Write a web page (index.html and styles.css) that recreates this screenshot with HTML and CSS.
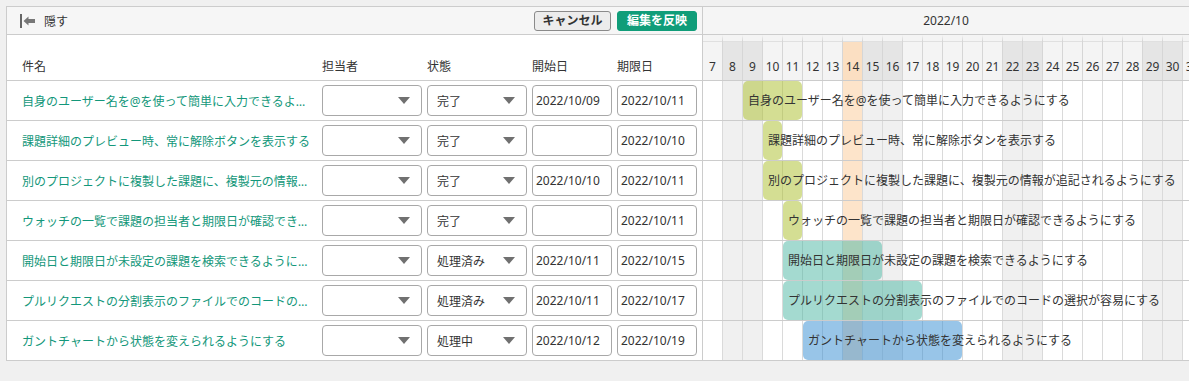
FILE: index.html
```html
<!DOCTYPE html>
<html lang="ja">
<head>
<meta charset="utf-8">
<title>Gantt</title>
<link rel="stylesheet" href="styles.css">
</head>
<body>
<div class="app">
  <div class="list">
    <div class="toolbar">
      <button class="hide">
        <svg width="16" height="16" viewBox="0 0 16 16" aria-hidden="true"><rect x="0" y="1" width="2" height="14" fill="#666"/><polygon points="3.5,8 8.5,3.5 8.5,6 15,6 15,10 8.5,10 8.5,12.5" fill="#777"/></svg>
        <span>隠す</span>
      </button>
      <div class="actions">
        <button class="btn btn-cancel">キャンセル</button>
        <button class="btn btn-primary">編集を反映</button>
      </div>
    </div>
    <div class="row head">
      <div class="c-title">件名</div>
      <div class="c-sel">担当者</div>
      <div class="c-sel">状態</div>
      <div class="c-date">開始日</div>
      <div class="c-date">期限日</div>
    </div>
    <div class="row">
      <a class="c-title link">自身のユーザー名を@を使って簡単に入力できるようにする</a>
      <div class="c-sel ctrl select"><span></span><i class="caret"></i></div>
      <div class="c-sel ctrl select"><span>完了</span><i class="caret"></i></div>
      <div class="c-date ctrl">2022/10/09</div>
      <div class="c-date ctrl">2022/10/11</div>
    </div>
    <div class="row">
      <a class="c-title link">課題詳細のプレビュー時、常に解除ボタンを表示する</a>
      <div class="c-sel ctrl select"><span></span><i class="caret"></i></div>
      <div class="c-sel ctrl select"><span>完了</span><i class="caret"></i></div>
      <div class="c-date ctrl"></div>
      <div class="c-date ctrl">2022/10/10</div>
    </div>
    <div class="row">
      <a class="c-title link">別のプロジェクトに複製した課題に、複製元の情報が追記されるようにする</a>
      <div class="c-sel ctrl select"><span></span><i class="caret"></i></div>
      <div class="c-sel ctrl select"><span>完了</span><i class="caret"></i></div>
      <div class="c-date ctrl">2022/10/10</div>
      <div class="c-date ctrl">2022/10/11</div>
    </div>
    <div class="row">
      <a class="c-title link">ウォッチの一覧で課題の担当者と期限日が確認できるようにする</a>
      <div class="c-sel ctrl select"><span></span><i class="caret"></i></div>
      <div class="c-sel ctrl select"><span>完了</span><i class="caret"></i></div>
      <div class="c-date ctrl"></div>
      <div class="c-date ctrl">2022/10/11</div>
    </div>
    <div class="row">
      <a class="c-title link">開始日と期限日が未設定の課題を検索できるようにする</a>
      <div class="c-sel ctrl select"><span></span><i class="caret"></i></div>
      <div class="c-sel ctrl select"><span>処理済み</span><i class="caret"></i></div>
      <div class="c-date ctrl">2022/10/11</div>
      <div class="c-date ctrl">2022/10/15</div>
    </div>
    <div class="row">
      <a class="c-title link">プルリクエストの分割表示のファイルでのコードの選択が容易にする</a>
      <div class="c-sel ctrl select"><span></span><i class="caret"></i></div>
      <div class="c-sel ctrl select"><span>処理済み</span><i class="caret"></i></div>
      <div class="c-date ctrl">2022/10/11</div>
      <div class="c-date ctrl">2022/10/17</div>
    </div>
    <div class="row">
      <a class="c-title link">ガントチャートから状態を変えられるようにする</a>
      <div class="c-sel ctrl select"><span></span><i class="caret"></i></div>
      <div class="c-sel ctrl select"><span>処理中</span><i class="caret"></i></div>
      <div class="c-date ctrl">2022/10/12</div>
      <div class="c-date ctrl">2022/10/19</div>
    </div>
  </div>

  <div class="gantt">
    <div class="month">2022/10</div>
    <div class="days">
      <div class="day">7</div>
      <div class="day we">8</div>
      <div class="day we">9</div>
      <div class="day">10</div>
      <div class="day">11</div>
      <div class="day">12</div>
      <div class="day">13</div>
      <div class="day today">14</div>
      <div class="day we">15</div>
      <div class="day we">16</div>
      <div class="day">17</div>
      <div class="day">18</div>
      <div class="day">19</div>
      <div class="day">20</div>
      <div class="day">21</div>
      <div class="day we">22</div>
      <div class="day we">23</div>
      <div class="day">24</div>
      <div class="day">25</div>
      <div class="day">26</div>
      <div class="day">27</div>
      <div class="day">28</div>
      <div class="day we">29</div>
      <div class="day we">30</div>
      <div class="day">31</div>
    </div>
    <div class="gbody">
      <div class="grid">
        <div class="col"></div><div class="col we"></div><div class="col we"></div><div class="col"></div><div class="col"></div><div class="col"></div><div class="col"></div><div class="col today"></div><div class="col we"></div><div class="col we"></div><div class="col"></div><div class="col"></div><div class="col"></div><div class="col"></div><div class="col"></div><div class="col we"></div><div class="col we"></div><div class="col"></div><div class="col"></div><div class="col"></div><div class="col"></div><div class="col"></div><div class="col we"></div><div class="col we"></div><div class="col"></div>
      </div>
      <div class="grow"><div class="bar done" style="left:40px;width:59px">自身のユーザー名を@を使って簡単に入力できるようにする</div></div>
      <div class="grow"><div class="bar done" style="left:60px;width:19px">課題詳細のプレビュー時、常に解除ボタンを表示する</div></div>
      <div class="grow"><div class="bar done" style="left:60px;width:39px">別のプロジェクトに複製した課題に、複製元の情報が追記されるようにする</div></div>
      <div class="grow"><div class="bar done" style="left:80px;width:19px">ウォッチの一覧で課題の担当者と期限日が確認できるようにする</div></div>
      <div class="grow"><div class="bar resolved" style="left:80px;width:99px">開始日と期限日が未設定の課題を検索できるようにする</div></div>
      <div class="grow"><div class="bar resolved" style="left:80px;width:139px">プルリクエストの分割表示のファイルでのコードの選択が容易にする</div></div>
      <div class="grow"><div class="bar progress" style="left:100px;width:159px">ガントチャートから状態を変えられるようにする</div></div>
    </div>
  </div>
</div>
</body>
</html>
```

FILE: styles.css
```css
* { box-sizing: border-box; }
html, body { margin: 0; padding: 0; }
body {
  background: #f0f0f0;
  font-family: "Noto Sans", "Noto Sans CJK JP", sans-serif;
  font-size: 12px;
  color: #333;
  overflow: hidden;
}
.app {
  display: flex;
  align-items: flex-start;
  margin: 6px 0 0 6px;
  border-top: 1px solid #ccc;
  border-left: 1px solid #ccc;
}
.list {
  width: 696px;
  flex: none;
  border-right: 1px solid #ccc;
  background: #fff;
}
.toolbar {
  height: 28px;
  display: flex;
  align-items: center;
  justify-content: space-between;
  padding: 0 5px 0 13px;
  background: #f6f6f6;
  border-bottom: 1px solid #ccc;
}
.hide {
  display: flex;
  align-items: center;
  gap: 8px;
  border: 0;
  background: none;
  padding: 0;
  font: inherit;
  color: #333;
}
.hide svg { display: block; }
.actions { display: flex; gap: 6px; }
.btn {
  height: 20px;
  padding: 0;
  font: inherit;
  font-weight: bold;
  font-size: 12px;
  line-height: 18px;
  border-radius: 3px;
  white-space: nowrap;
  text-align: center;
}
.btn-cancel {
  background: #ececec;
  border: 1px solid #8a8a8a;
  color: #333;
  width: 77px;
}
.btn-primary {
  background: #109d79;
  border: 1px solid #109d79;
  color: #fff;
  width: 80px;
}
.row {
  height: 40px;
  display: flex;
  align-items: center;
  gap: 5px;
  padding: 0 5px 0 15px;
  border-bottom: 1px solid #ccc;
}
.row.head {
  height: 46px;
  align-items: flex-end;
  padding-bottom: 5px;
  background: #fff;
}
.c-title {
  width: 295px;
  flex: none;
  white-space: nowrap;
  overflow: hidden;
  text-overflow: ellipsis;
}
.link { color: #13977a; text-decoration: none; }
.c-sel { width: 100px; flex: none; }
.c-date { width: 80px; flex: none; }
.ctrl {
  height: 31px;
  border: 1px solid #a8a8a8;
  border-radius: 4px;
  background: #fff;
  display: flex;
  align-items: center;
  padding: 0 3px;
  white-space: nowrap;
}
.select { padding: 0 11px 0 9px; justify-content: space-between; }
.caret {
  width: 0; height: 0;
  border-left: 6px solid transparent;
  border-right: 6px solid transparent;
  border-top: 7px solid #707070;
}

.gantt {
  flex: 1;
  min-width: 0;
  overflow: hidden;
}
.month {
  height: 28px;
  line-height: 27px;
  text-align: center;
  background: #f5f5f5;
  border-bottom: 1px solid #ccc;
}
.days {
  display: flex;
  height: 46px;
  border-bottom: 1px solid #ccc;
  background: #f4f4f4;
}
.day {
  width: 20px;
  flex: none;
  border-right: 1px solid #d6d6d6;
  display: flex;
  align-items: flex-end;
  justify-content: center;
  padding-bottom: 5px;
  border-top: 6px solid #f4f4f4;
  box-shadow: inset 0 1px 0 #e0e0e0;
}
.day.we { background: #e5e5e5; }
.day.today { background: #fbdfc2; }
.gbody { position: relative; }
.grid {
  position: absolute;
  inset: 0;
  display: flex;
}
.col {
  width: 20px;
  flex: none;
  border-right: 1px solid #dadada;
  background: #fff;
}
.col.we { background: #f0f0f0; }
.col.today { background: #fde4ca; }
.grow {
  position: relative;
  height: 40px;
  border-bottom: 1px solid #ccc;
}
.bar {
  position: absolute;
  top: 0;
  height: 39px;
  border-radius: 5px;
  padding-left: 5px;
  line-height: 39px;
  white-space: nowrap;
  color: #333;
}
.bar.done { background: rgba(170, 190, 40, 0.5); }
.bar.resolved { background: rgba(80, 185, 165, 0.52); }
.bar.progress { background: rgba(50, 140, 210, 0.5); }
```
